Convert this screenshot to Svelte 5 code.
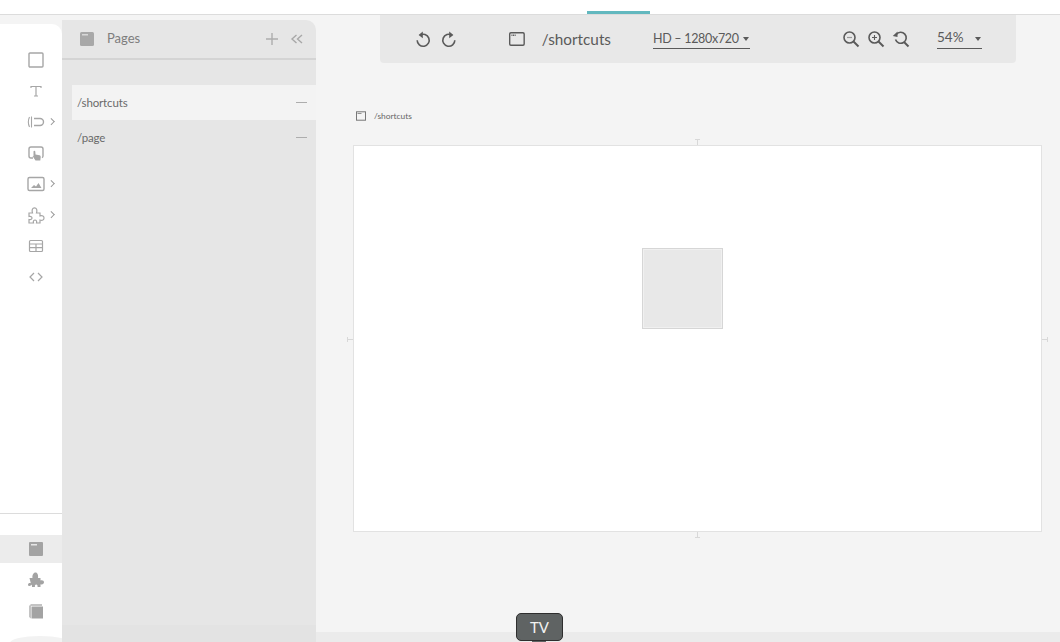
<script>
  const tools = [
    { id: 'box' },
    { id: 'text' },
    { id: 'button', more: true },
    { id: 'click' },
    { id: 'image', more: true },
    { id: 'puzzle', more: true },
    { id: 'table' },
    { id: 'code' }
  ];
  const pages = [
    { name: '/shortcuts', active: true },
    { name: '/page', active: false }
  ];
</script>

<div class="app">
  <div class="topbar"><span class="accent"></span></div>

  <div class="body">
    <aside class="rail">
      <div class="tools">
        {#each tools as tool}
          <div class="tool">
            <svg viewBox="0 0 20 20" width="20" height="20" fill="none" stroke="#a6a6a6" stroke-width="1.4">
              {#if tool.id === 'box'}
                <rect x="3" y="3" width="14" height="14" rx="1" />
              {:else if tool.id === 'text'}
                <path d="M5 7V5.500h10V7M10 5.500v9.500M8 15h4" stroke-width="1.200" />
              {:else if tool.id === 'button'}
                <path d="M3.500 5C2.200 7.800 2.200 12.200 3.500 15M5.500 4.500v11" stroke-width="1.100" />
                <path d="M8 6.500h6a3.500 3.500 0 0 1 0 7H8" />
              {:else if tool.id === 'click'}
                <path d="M7 15H5a2 2 0 0 1-2-2V6a2 2 0 0 1 2-2h10a2 2 0 0 1 2 2v7a2 2 0 0 1-1 1.700" />
                <path d="M7.500 8.500c0-1 1.700-1 1.800 0l.2 3 4 .8c1 .3 1.300 1 1.200 2l-.4 3.200H9.500l-3-4.500 1 .3z" fill="#a6a6a6" stroke="none" />
              {:else if tool.id === 'image'}
                <rect x="2" y="3.500" width="16" height="13" rx="1.500" />
                <path d="M5 14l3-3 2 1.500 2.500-3.500 3 5z" fill="#a6a6a6" stroke="none" />
              {:else if tool.id === 'puzzle'}
                <path d="M3 8h3.500C5.500 5 6.500 2.800 8.500 2.800S11.500 5 10.500 8H14v3c2.500-.8 4 .2 4 2s-1.500 2.800-4 2v3h-3.500c.6-2-.4-3-1.500-3s-2.200 1-1.500 3H3v-3.500c2 .5 3-.4 3-1.500s-1-2-3-1.500z" stroke-width="1.200" />
              {:else if tool.id === 'table'}
                <rect x="3.500" y="4.500" width="13" height="11" rx="1" stroke-width="1.200" />
                <path d="M3.500 8h13M3.500 11.700h13M10 8v7.500" stroke-width="1.200" />
              {:else}
                <path d="M8 6L4 10l4 4M12 6l4 4-4 4" stroke-width="1.200" />
              {/if}
            </svg>
            {#if tool.more}<span class="more"></span>{/if}
          </div>
        {/each}
      </div>

      <div class="rail-foot">
        <div class="foot-item selected">
          <svg viewBox="0 0 20 20" width="20" height="20">
            <rect x="3" y="3" width="14" height="14" rx="1" fill="#a3a3a3" />
            <rect x="5" y="5" width="6" height="1.500" fill="#e6e6e6" />
          </svg>
        </div>
        <div class="foot-item">
          <svg viewBox="0 0 20 20" width="20" height="20">
            <path d="M3.500 8h3C6 5 7.500 2.500 9.500 2.500S12.500 5 12 8h2.500v2.500c2-.6 3.500.2 3.500 1.800s-1.500 2.500-3.500 1.900V17h-3c.4-1.500-.3-2.500-1.300-2.500S8.500 15.500 9 17H6v-2.500c-1.500 2-4 1.700-4 .2s1.500-2 2.800-1.500z" fill="#a3a3a3" />
          </svg>
        </div>
        <div class="foot-item">
          <svg viewBox="0 0 20 20" width="20" height="20">
            <path d="M3 5l2-2h11v2z" fill="#c4c4c4" />
            <path d="M3 5v11l2 1.500V5z" fill="#c4c4c4" />
            <rect x="5.500" y="5.500" width="11.500" height="12" fill="#a3a3a3" />
          </svg>
        </div>
      </div>
    </aside>

    <section class="panel">
      <header class="panel-head">
        <svg viewBox="0 0 16 16" width="16" height="16">
          <rect x="1" y="1" width="14" height="14" rx="1.500" fill="#a8a8a8" />
          <rect x="3" y="3" width="6" height="1.500" fill="#d8d8d8" />
        </svg>
        <span class="panel-title">Pages</span>
        <svg class="plus" viewBox="0 0 14 14" width="14" height="14" stroke="#adadad" stroke-width="1.400">
          <path d="M7 1v12M1 7h12" />
        </svg>
        <svg class="collapse" viewBox="0 0 14 12" width="14" height="12" fill="none" stroke="#a8a8a8" stroke-width="1.400">
          <path d="M6.500 2L2 6l4.500 4M12 2L7.500 6l4.500 4" />
        </svg>
      </header>
      <ul class="page-list">
        {#each pages as page}
          <li class:active={page.active}>
            <span>{page.name}</span>
            <i class="dash"></i>
          </li>
        {/each}
      </ul>
      <div class="panel-foot"></div>
    </section>

    <main class="stage">
      <div class="toolbar">
        <div class="history">
          <svg viewBox="0 0 18 18" width="18" height="18" fill="none" stroke="#5a5a5a" stroke-width="1.600">
            <path d="M6 5.200a6 6 0 1 1-2.800 5" />
            <path d="M8.800 1.500L4.600 5l4.200 3.200z" fill="#5a5a5a" stroke="none" />
          </svg>
          <svg viewBox="0 0 18 18" width="18" height="18" fill="none" stroke="#5a5a5a" stroke-width="1.600">
            <path d="M12 5.200a6 6 0 1 0 2.800 5" />
            <path d="M9.200 1.500L13.400 5 9.200 8.200z" fill="#5a5a5a" stroke="none" />
          </svg>
        </div>

        <div class="route">
          <svg viewBox="0 0 18 18" width="18" height="18" fill="none" stroke="#5a5a5a" stroke-width="1.400">
            <rect x="1.700" y="2.700" width="14.600" height="12.600" rx="1.200" />
            <path d="M3.500 5.200h4.500" stroke-dasharray="1 .6" />
          </svg>
          <span>/shortcuts</span>
        </div>

        <div class="select res">HD – 1280x720 <span class="caret"></span></div>

        <div class="zoom">
          <svg viewBox="0 0 18 18" width="18" height="18" fill="none" stroke="#5a5a5a" stroke-width="1.600">
            <circle cx="7.500" cy="7.500" r="5.500" /><path d="M11.500 11.500L16.500 16.500" stroke-width="2" /><path d="M5 7.500h5" stroke="#999" stroke-width="1.200" />
          </svg>
          <svg viewBox="0 0 18 18" width="18" height="18" fill="none" stroke="#5a5a5a" stroke-width="1.600">
            <circle cx="7.500" cy="7.500" r="5.500" /><path d="M11.500 11.500L16.500 16.500" stroke-width="2" /><path d="M5 7.500h5M7.500 5v5" stroke-width="1.100" />
          </svg>
          <svg viewBox="0 0 18 18" width="18" height="18" fill="none" stroke="#5a5a5a" stroke-width="1.600">
            <path d="M4.300 4.500a5.500 5.500 0 1 1-.8 5" /><path d="M12 12L16.500 16.500" stroke-width="2" />
            <path d="M5.500 1.500v5.500L.8 6z" fill="#5a5a5a" stroke="none" />
          </svg>
        </div>

        <div class="select pct"><span class="pct-value">54%</span> <span class="caret"></span></div>
      </div>

      <div class="crumb">
        <svg viewBox="0 0 10 10" width="10" height="10" fill="none" stroke="#777" stroke-width="1">
          <rect x=".5" y=".8" width="9" height="8.400" />
          <path d="M1.500 2.500h4" stroke-width=".8" />
        </svg>
        <span>/shortcuts</span>
      </div>

      <div class="canvas">
        <span class="guide top"></span>
        <span class="guide bottom"></span>
        <span class="guide left"></span>
        <span class="guide right"></span>
        <div class="block"></div>
      </div>

      <div class="strip"></div>
      <div class="tip">TV</div>
    </main>
  </div>
</div>

<style>
  :global(body) {
    margin: 0;
    background: #f4f4f4;
    overflow: hidden;
  }

  .app {
    width: 1060px;
    height: 642px;
    display: flex;
    flex-direction: column;
    overflow: hidden;
    font-family: "Lato", "Noto Sans", sans-serif;
    color: #6e6e6e;
    background: #f4f4f4;
  }

  .topbar {
    position: relative;
    height: 14px;
    flex: none;
    background: #fff;
    border-bottom: 1px solid #dcdcdc;
  }

  .accent {
    position: absolute;
    left: 587px;
    top: 11px;
    width: 63px;
    height: 3px;
    background: #62b8bf;
  }

  .body {
    flex: 1;
    display: flex;
    min-height: 0;
  }

  .rail {
    width: 62px;
    flex: none;
    margin-top: 9px;
    background: #fff;
    border-top-right-radius: 10px;
    display: flex;
    flex-direction: column;
    position: relative;
    overflow: hidden;
  }

  .rail::after {
    content: "";
    position: absolute;
    left: 10px;
    bottom: -8px;
    width: 60px;
    height: 14px;
    border-radius: 50%;
    background: #f2f2f2;
  }

  .tools {
    flex: 1;
    padding-top: 26px;
    display: flex;
    flex-direction: column;
    gap: 11px;
  }

  .tool {
    position: relative;
    height: 20px;
    display: flex;
    padding-left: 26px;
  }

  .more {
    position: absolute;
    left: 49px;
    top: 7px;
    width: 3.500px;
    height: 3.500px;
    border-top: 1.500px solid #999;
    border-right: 1.500px solid #999;
    transform: rotate(45deg);
  }

  .rail-foot {
    height: 129px;
    box-sizing: border-box;
    border-top: 1px solid #dcdcdc;
    padding-top: 21px;
    display: flex;
    flex-direction: column;
    gap: 3px;
  }

  .foot-item {
    height: 28px;
    display: flex;
    align-items: center;
    padding-left: 26px;
  }

  .foot-item.selected {
    background: #ececec;
  }

  .panel {
    width: 254px;
    flex: none;
    margin-top: 5px;
    background: #e6e6e6;
    border-top-right-radius: 10px;
    display: flex;
    flex-direction: column;
  }

  .panel-head {
    height: 38px;
    flex: none;
    border-bottom: 2px solid #d4d4d4;
    display: flex;
    align-items: center;
    padding: 0 12px 0 17px;
    box-sizing: content-box;
  }

  .panel-title {
    margin: 0 0 3px 12px;
    flex: 1;
    font-size: 13px;
    color: #7d7d7d;
  }

  .plus {
    margin-left: 1px;
  }

  .collapse {
    margin-left: 11px;
  }

  .page-list {
    flex: 1;
    list-style: none;
    margin: 25px 0 0 10px;
    padding: 0;
  }

  .page-list li {
    height: 35px;
    display: flex;
    align-items: center;
    justify-content: space-between;
    padding: 0 9px 0 5px;
    font-size: 11.500px;
    letter-spacing: -0.15px;
    color: #6a6a6a;
  }

  .page-list li span {
    margin-bottom: 1px;
  }

  .page-list li.active {
    background: #f3f3f3;
  }

  .dash {
    width: 11px;
    height: 1.500px;
    background: #adadad;
  }

  .panel-foot {
    height: 17px;
    background: #e3e3e3;
  }

  .stage {
    flex: 1;
    position: relative;
    display: flex;
    flex-direction: column;
    min-width: 0;
  }

  .toolbar {
    height: 48px;
    flex: none;
    margin: 0 44px 0 64px;
    background: #e8e8e8;
    border-radius: 0 0 4px 4px;
    display: flex;
    align-items: center;
    padding-left: 34px;
    color: #5a5a5a;
  }

  .history {
    display: flex;
    gap: 8px;
  }

  .route {
    display: flex;
    align-items: center;
    gap: 16px;
    margin-left: 50px;
    width: 103px;
    font-size: 15.300px;
  }

  .select {
    border-bottom: 1px solid #5a5a5a;
    font-size: 12.500px;
    letter-spacing: -0.3px;
    line-height: 18px;
    height: 19px;
    white-space: nowrap;
    display: flex;
    align-items: center;
    justify-content: space-between;
  }

  .res {
    width: 97px;
    margin-left: 42px;
  }

  .pct {
    width: 45px;
    margin-left: 27px;
    font-size: 13.500px;
    letter-spacing: 0;
  }

  .pct-value {
    margin-bottom: 3px;
  }

  .caret {
    width: 0;
    height: 0;
    margin-right: 1px;
    border-left: 3.500px solid transparent;
    border-right: 3.500px solid transparent;
    border-top: 4px solid #5a5a5a;
  }

  .zoom {
    display: flex;
    gap: 7px;
    margin-left: 92px;
  }

  .crumb {
    display: flex;
    align-items: center;
    gap: 8px;
    margin: 48px 0 0 40px;
    height: 10px;
    font-size: 8.400px;
    color: #666;
  }

  .canvas {
    position: relative;
    width: 687px;
    height: 385px;
    margin: 24px 0 0 37px;
    background: #fff;
    border: 1px solid #e2e2e2;
    box-sizing: content-box;
    flex: none;
  }

  .guide {
    position: absolute;
    background: #d8d8d8;
  }

  .guide.top, .guide.bottom {
    left: 343px;
    width: 1px;
    height: 6px;
  }

  .guide.top { top: -7px; }
  .guide.bottom { bottom: -7px; }

  .guide.top::before, .guide.bottom::before {
    content: "";
    position: absolute;
    left: -2px;
    width: 5px;
    height: 1px;
    background: #d8d8d8;
  }

  .guide.top::before { top: 0; }
  .guide.bottom::before { bottom: 0; }

  .guide.left, .guide.right {
    top: 193px;
    width: 6px;
    height: 1px;
  }

  .guide.left { left: -7px; }
  .guide.right { right: -7px; }

  .guide.left::before, .guide.right::before {
    content: "";
    position: absolute;
    top: -2px;
    width: 1px;
    height: 5px;
    background: #d8d8d8;
  }

  .guide.left::before { left: 0; }
  .guide.right::before { right: 0; }

  .block {
    position: absolute;
    left: 288px;
    top: 102px;
    width: 79px;
    height: 79px;
    background: #e8e8e8;
    border: 1px solid #d6d6d6;
    box-shadow: inset 0 0 0 1px #f0f0f0;
  }

  .strip {
    position: absolute;
    left: 0;
    right: 0;
    bottom: 0;
    height: 10px;
    background: #ebebeb;
  }

  .tip {
    position: absolute;
    left: 200px;
    top: 598px;
    width: 45px;
    height: 26px;
    border: 1px solid #2e2e2e;
    border-radius: 5px;
    background: #5f6363;
    color: #f2f2f2;
    font-size: 15px;
    display: flex;
    align-items: center;
    justify-content: center;
  }

  .tip::after {
    content: "";
    position: absolute;
    left: 15px;
    bottom: -4px;
    width: 14px;
    height: 3px;
    background: #5f6363;
    border-radius: 0 0 5px 5px;
  }
</style>
